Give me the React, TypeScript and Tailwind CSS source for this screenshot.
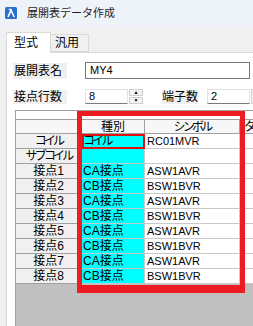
import React from 'react';

const jp = "font-['Liberation_Sans','Noto_Sans_CJK_JP',sans-serif]";

type Row = { head: string; kind: string; symbol: string; focus?: boolean };

const rows: Row[] = [
  { head: 'コイル', kind: 'コイル', symbol: 'RC01MVR', focus: true },
  { head: 'サブコイル', kind: '', symbol: '' },
  { head: '接点1', kind: 'CA接点', symbol: 'ASW1AVR' },
  { head: '接点2', kind: 'CB接点', symbol: 'BSW1BVR' },
  { head: '接点3', kind: 'CA接点', symbol: 'ASW1AVR' },
  { head: '接点4', kind: 'CB接点', symbol: 'BSW1BVR' },
  { head: '接点5', kind: 'CA接点', symbol: 'ASW1AVR' },
  { head: '接点6', kind: 'CB接点', symbol: 'BSW1BVR' },
  { head: '接点7', kind: 'CA接点', symbol: 'ASW1AVR' },
  { head: '接点8', kind: 'CB接点', symbol: 'BSW1BVR' },
];

// kana-only labels are set narrower, like the proportional kana of the original UI font
const isKana = (s: string) => /^[\u30a0-\u30ff]+$/.test(s);

function AppIcon() {
  return (
    <svg width="12" height="12" viewBox="0 0 12 12">
      <rect x="0" y="0" width="12" height="12" rx="1.5" fill="#2a6fc9" />
      <path d="M3 10 L6 3.2 L9.2 10" fill="none" stroke="#fff" strokeWidth="1.6" />
      <path d="M3.6 2.5 H6.2" stroke="#fff" strokeWidth="1.3" />
    </svg>
  );
}

function Spinner() {
  return (
    <div className="ml-[1px] w-[14px] h-[15px] flex flex-col gap-[1px]">
      <div className="flex-1 bg-[#f3f3f3] border border-[#cfcfcf] flex items-center justify-center text-[5px] leading-none text-black">▲</div>
      <div className="flex-1 bg-[#f3f3f3] border border-[#cfcfcf] flex items-center justify-center text-[5px] leading-none text-black">▼</div>
    </div>
  );
}

export default function App() {
  return (
    <div className={`relative w-[253px] h-[326px] overflow-hidden bg-[#f0f0f0] flex flex-col text-black ${jp}`}>
      {/* title bar */}
      <div className="h-[26px] bg-[#eef3f9] flex items-center pl-[5px] gap-[10px] shrink-0">
        <AppIcon />
        <span className="text-[11px] leading-none text-[#1f1f1f]">展開表データ作成</span>
      </div>

      {/* tabs */}
      <div className="h-[26px] flex items-end pl-[6px] shrink-0">
        <div className="relative z-10 -mb-[1px] w-[45px] h-[21px] bg-white border border-b-0 border-[#d9d9d9] flex items-center pl-[7px] text-[12px] leading-none">
          型式
        </div>
        <div className="w-[38px] h-[18px] bg-[#f0f0f0] border border-l-0 border-[#d9d9d9] flex items-center pl-[4px] text-[12px] leading-none">
          汎用
        </div>
      </div>

      {/* body */}
      <div className="flex-1 flex min-h-0">
        <div className="w-[6px] shrink-0" />
        <div className="flex-1 bg-white border-l border-t border-[#d9d9d9] flex flex-col min-h-0">
          {/* 展開表名 */}
          <div className="mt-[9px] pl-[6px] flex items-center h-[17px]">
            <div className="w-[54px] h-[16px] bg-[#f0f0f0] text-[12px] leading-[16px] pl-[1px] whitespace-nowrap">展開表名</div>
            <div className="ml-[18px] w-[165px] h-[17px] border border-[#7a7a7a] text-[11px] leading-[15px] pl-[4px]">MY4</div>
          </div>

          {/* 接点行数 / 端子数 */}
          <div className="mt-[10px] pl-[6px] flex items-center h-[15px]">
            <div className="w-[54px] h-[14px] bg-[#f0f0f0] text-[12px] leading-[14px] pl-[1px] whitespace-nowrap">接点行数</div>
            <div className="ml-[18px] w-[43px] h-[15px] border border-[#e3e3e3] border-b-[#7a7a7a] bg-white text-[11px] leading-[13px] pl-[3px]">8</div>
            <Spinner />
            <div className="ml-[19px] w-[36px] h-[14px] bg-[#f0f0f0] text-[12px] leading-[14px] whitespace-nowrap">端子数</div>
            <div className="ml-[9px] w-[43px] h-[15px] border border-[#e3e3e3] border-b-[#7a7a7a] bg-white text-[11px] leading-[13px] pl-[3px]">2</div>
            <div className="ml-[1px] w-[14px] h-[15px] bg-[#f3f3f3] border border-[#cfcfcf]" />
          </div>

          {/* grid */}
          <div className="mt-[6px] ml-[8px] flex-1 flex flex-col border-t border-l border-[#a0a0a0] min-h-0">
            <div className="h-[8px] bg-white shrink-0" />
            <div className="flex h-[15px] shrink-0 text-[12px] leading-[14px]">
              <div className="w-[66px] shrink-0 bg-[#f7f7f7] border-r border-b border-t border-[#a0a0a0]" />
              <div className="w-[63px] shrink-0 bg-[#f7f7f7] border-r border-b border-t border-[#a0a0a0] text-center">種別</div>
              <div className="w-[95px] shrink-0 bg-[#f7f7f7] border-r border-b border-t border-[#a0a0a0] text-center tracking-[-2.8px]">シンボル</div>
              <div className="w-[100px] shrink-0 bg-[#f7f7f7] border-b border-t border-[#a0a0a0] pl-[4px] tracking-[-2.8px] whitespace-nowrap">タイプ</div>
            </div>
            {rows.map((r) => (
              <div key={r.head} className="flex h-[15px] shrink-0 text-[12px] leading-[14px]">
                <div
                  className={`w-[66px] shrink-0 bg-[#f0f0f0] border-r border-b border-[#a0a0a0] text-center whitespace-nowrap ${
                    isKana(r.head) ? 'tracking-[-2.8px]' : ''
                  }`}
                >
                  {r.head}
                </div>
                <div
                  className={`w-[63px] shrink-0 bg-[#00ffff] border-r border-b border-[#c8c8c8] pl-[1px] whitespace-nowrap ${
                    r.focus ? 'outline-2 -outline-offset-2 outline-[#e01010] tracking-[-2.8px]' : ''
                  }`}
                >
                  {r.kind}
                </div>
                <div className="w-[95px] shrink-0 bg-white border-r border-b border-[#c8c8c8] pl-[2px] text-[11px]">
                  {r.symbol}
                </div>
                <div className="w-[100px] shrink-0 bg-white border-b border-[#c8c8c8]" />
              </div>
            ))}
            <div className="flex-1 bg-[#c0c0c0]" />
          </div>
        </div>
      </div>

      {/* red annotation frame */}
      <div className="absolute left-[77px] top-[111px] w-[168px] h-[182px] border-[5px] border-b-[8px] border-[#ed1c24] pointer-events-none" />
    </div>
  );
}
